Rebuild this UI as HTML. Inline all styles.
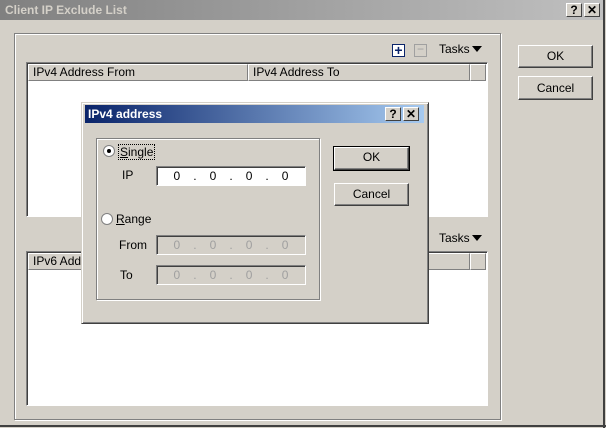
<!DOCTYPE html><html><head><style>
*{margin:0;padding:0;box-sizing:border-box}
body{width:606px;height:428px;background:#d4d0c8;font-family:"Liberation Sans",sans-serif;font-size:11px;position:relative;overflow:hidden;color:#000}
.a{position:absolute}
.btn{position:absolute;background:#d4d0c8;border:1px solid;border-color:#fff #404040 #404040 #fff;box-shadow:inset -1px -1px 0 #808080;text-align:center;font-size:12px}
.sunk{border:1px solid;border-color:#808080 #fff #fff #808080;box-shadow:inset 1px 1px 0 #404040}
.grp{border:1px solid #808080;box-shadow:1px 1px 0 #fff,inset 1px 1px 0 #fff}
.tb{width:16px;height:14px;background:#d4d0c8;border:1px solid;border-color:#fff #404040 #404040 #fff;font-weight:bold;font-size:12px;text-align:center;line-height:12px}
.ip{position:absolute;display:flex;justify-content:space-around;padding:0 10px;font-size:12px;line-height:18px}
.hd{position:absolute;height:17px;background:#d4d0c8;border:1px solid;border-color:#fff #808080 #808080 #fff;padding-left:4px;line-height:15px;font-size:12px}
</style></head><body>
<div class="a" style="left:0;top:0;width:604px;height:20px;background:linear-gradient(90deg,#808080,#c0c0c0)"></div>
<div class="a" style="left:5px;top:3px;color:#d4d0c8;font-weight:bold;font-size:12px">Client IP Exclude List</div>
<div class="a tb" style="left:566px;top:3px">?</div>
<div class="a tb" style="left:584px;top:3px">✕</div>
<div class="a" style="left:603px;top:0;width:2px;height:428px;background:#404040"></div>
<div class="a" style="left:0;top:425px;width:606px;height:2px;background:#404040"></div>

<div class="a grp" style="left:14px;top:33px;width:487px;height:387px"></div>
<div class="a" style="left:392px;top:44px;width:13px;height:13px;border:1px solid #0a246a;background:#fff;color:#0a246a;font-weight:bold;font-size:14px;line-height:10px;text-align:center">+</div>
<div class="a" style="left:414px;top:44px;width:13px;height:13px;border:1px solid #a0a0a0;color:#a0a0a0;font-size:12px;line-height:9px;text-align:center">−</div>
<div class="a" style="left:439px;top:42px;font-size:12px">Tasks</div>
<div class="a" style="left:472px;top:46px;border:5px solid transparent;border-top:6px solid #000"></div>
<div class="a" style="left:439px;top:231px;font-size:12px">Tasks</div>
<div class="a" style="left:472px;top:235px;border:5px solid transparent;border-top:6px solid #000"></div>

<div class="a sunk" style="left:26px;top:62px;width:462px;height:155px;background:#fff"></div>
<div class="hd" style="left:28px;top:64px;width:220px">IPv4 Address From</div>
<div class="hd" style="left:248px;top:64px;width:222px">IPv4 Address To</div>
<div class="hd" style="left:470px;top:64px;width:16px"></div>
<div class="a sunk" style="left:26px;top:251px;width:462px;height:155px;background:#fff"></div>
<div class="hd" style="left:28px;top:253px;width:220px">IPv6 Address From</div>
<div class="hd" style="left:248px;top:253px;width:222px"></div>
<div class="hd" style="left:470px;top:253px;width:16px"></div>

<div class="btn" style="left:518px;top:45px;width:75px;height:23px;line-height:21px">OK</div>
<div class="btn" style="left:518px;top:76px;width:75px;height:24px;line-height:22px">Cancel</div>

<div class="a" style="left:81px;top:102px;width:348px;height:222px;background:#d4d0c8;border:1px solid;border-color:#d4d0c8 #404040 #404040 #d4d0c8;box-shadow:inset 1px 1px 0 #fff,inset -1px -1px 0 #808080"></div>
<div class="a" style="left:85px;top:105px;width:339px;height:18px;background:linear-gradient(90deg,#0a246a,#a6caf0)"></div>
<div class="a" style="left:88px;top:107px;color:#fff;font-weight:bold;font-size:12px">IPv4 address</div>
<div class="a tb" style="left:385px;top:107px">?</div>
<div class="a tb" style="left:403px;top:107px">✕</div>
<div class="a grp" style="left:96px;top:138px;width:224px;height:162px"></div>
<div class="a" style="left:103px;top:145px;width:12px;height:12px;border-radius:50%;background:#fff;border:1px solid #808080"><div class="a" style="left:3px;top:3px;width:4px;height:4px;border-radius:50%;background:#000"></div></div>
<div class="a" style="left:118px;top:144px;font-size:12px;border:1px dotted #000;padding:0 1px"><u>S</u>ingle</div>
<div class="a" style="left:122px;top:168px;font-size:12px">IP</div>
<div class="ip sunk" style="left:156px;top:166px;width:150px;height:20px;background:#fff"><span>0</span><span>.</span><span>0</span><span>.</span><span>0</span><span>.</span><span>0</span></div>
<div class="a" style="left:101px;top:213px;width:12px;height:12px;border-radius:50%;background:#fff;border:1px solid #808080"></div>
<div class="a" style="left:116px;top:212px;font-size:12px"><u>R</u>ange</div>
<div class="a" style="left:119px;top:238px;font-size:12px">From</div>
<div class="ip sunk" style="left:156px;top:235px;width:150px;height:20px;color:#a0a0a0"><span>0</span><span>.</span><span>0</span><span>.</span><span>0</span><span>.</span><span>0</span></div>
<div class="a" style="left:120px;top:268px;font-size:12px">To</div>
<div class="ip sunk" style="left:156px;top:265px;width:150px;height:20px;color:#a0a0a0"><span>0</span><span>.</span><span>0</span><span>.</span><span>0</span><span>.</span><span>0</span></div>
<div class="btn" style="left:334px;top:147px;width:75px;height:23px;line-height:19px;outline:1px solid #000">OK</div>
<div class="btn" style="left:334px;top:183px;width:75px;height:23px;line-height:21px">Cancel</div>
</body></html>
